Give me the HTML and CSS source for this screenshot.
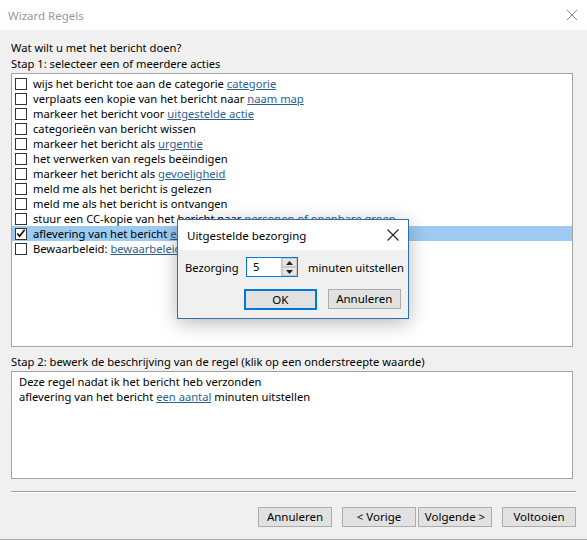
FILE: index.html
```html
<!DOCTYPE html>
<html>
<head>
<meta charset="utf-8">
<link rel="stylesheet" href="styles.css">
</head>
<body>
<div class="window">
  <div class="titlebar">
    <span class="title">Wizard Regels</span>
    <svg class="close" width="12" height="12" viewBox="0 0 12 12"><path d="M1 1L11 11M11 1L1 11" stroke="#8a8a8a" stroke-width="1"/></svg>
  </div>
  <div class="content">
    <div class="label">Wat wilt u met het bericht doen?</div>
    <div class="label">Stap 1: selecteer een of meerdere acties</div>
    <div class="listbox">
      <div class="row"><span class="cb"></span><span>wijs het bericht toe aan de categorie <a>categorie</a></span></div>
      <div class="row"><span class="cb"></span><span>verplaats een kopie van het bericht naar <a>naam map</a></span></div>
      <div class="row"><span class="cb"></span><span>markeer het bericht voor <a>uitgestelde actie</a></span></div>
      <div class="row"><span class="cb"></span><span>categorieën van bericht wissen</span></div>
      <div class="row"><span class="cb"></span><span>markeer het bericht als <a>urgentie</a></span></div>
      <div class="row"><span class="cb"></span><span>het verwerken van regels beëindigen</span></div>
      <div class="row"><span class="cb"></span><span>markeer het bericht als <a>gevoeligheid</a></span></div>
      <div class="row"><span class="cb"></span><span>meld me als het bericht is gelezen</span></div>
      <div class="row"><span class="cb"></span><span>meld me als het bericht is ontvangen</span></div>
      <div class="row"><span class="cb"></span><span>stuur een CC-kopie van het bericht naar <a>personen of openbare groep</a></span></div>
      <div class="row selected"><span class="cb"><svg width="11" height="11" viewBox="0 0 11 11"><path d="M1.5 5.5L4 8.5L9.5 1.5" fill="none" stroke="#000" stroke-width="1.8"/></svg></span><span>aflevering van het bericht <a>een aantal</a> minuten uitstellen</span></div>
      <div class="row"><span class="cb"></span><span>Bewaarbeleid: <a>bewaarbeleid</a></span></div>
    </div>
    <div class="label step2">Stap 2: bewerk de beschrijving van de regel (klik op een onderstreepte waarde)</div>
    <div class="descbox">
      <div>Deze regel nadat ik het bericht heb verzonden</div>
      <div>aflevering van het bericht <a>een aantal</a> minuten uitstellen</div>
    </div>
    <div class="separator"></div>
    <div class="buttons">
      <button class="btn">Annuleren</button>
      <div class="navpair">
        <button class="btn">&lt; Vorige</button>
        <button class="btn">Volgende &gt;</button>
      </div>
      <button class="btn">Voltooien</button>
    </div>
  </div>
  <div class="dialog">
    <div class="dtitle">
      <span>Uitgestelde bezorging</span>
      <svg width="12" height="12" viewBox="0 0 12 12"><path d="M0.5 0.5L11.5 11.5M11.5 0.5L0.5 11.5" stroke="#222" stroke-width="1.1"/></svg>
    </div>
    <div class="dbody">
      <div class="drow">
        <span class="dlabel">Bezorging</span>
        <div class="spin">
          <span class="spinval">5</span>
          <div class="spinbtns">
            <span class="arrow"><svg width="7" height="4" viewBox="0 0 7 4"><path d="M0 4L3.5 0L7 4Z" fill="#222"/></svg></span>
            <span class="arrow"><svg width="7" height="4" viewBox="0 0 7 4"><path d="M0 0L3.5 4L7 0Z" fill="#222"/></svg></span>
          </div>
        </div>
        <span class="dunit">minuten uitstellen</span>
      </div>
      <div class="dbuttons">
        <button class="btn ok">OK</button>
        <button class="btn">Annuleren</button>
      </div>
    </div>
  </div>
</div>
</body>
</html>
```
FILE: styles.css
```css
* { box-sizing: border-box; }
html, body { margin: 0; padding: 0; }
body {
  font-family: "Noto Sans", "Open Sans", sans-serif;
  font-size: 11.2px;
  color: #000;
  background: #f0f0f0;
}
.window {
  position: relative;
  width: 587px;
  height: 540px;
  background: #f0f0f0;
  border-bottom: 1px solid #a9a9a9;
  overflow: hidden;
}
.titlebar {
  height: 30px;
  background: #fff;
  display: flex;
  align-items: center;
  justify-content: space-between;
  padding: 0 9px 0 8px;
}
.title { color: #999; font-size: 11.5px; }
.content {
  padding: 10px 15px 0 11px;
}
.label {
  height: 16px;
  line-height: 16px;
  white-space: nowrap;
}
a {
  color: #2d5f93;
  text-decoration: underline;
  text-underline-offset: 1px;
}
.listbox {
  margin-top: 1px;
  width: 562px;
  height: 274px;
  background: #fff;
  border: 1px solid #a3a3a3;
  padding-top: 2px;
}
.row {
  height: 15px;
  display: flex;
  align-items: center;
  gap: 6px;
  padding-left: 3px;
  white-space: nowrap;
  line-height: 15px;
}
.row.selected { background: #9ccaf0; }
.cb {
  width: 12px;
  height: 12px;
  border: 1px solid #333;
  background: #fff;
  flex: none;
  display: flex;
  align-items: center;
  justify-content: center;
}
.step2 { margin-top: 7px; }
.descbox {
  margin-top: 1px;
  width: 562px;
  height: 108px;
  background: #fff;
  border: 1px solid #a3a3a3;
  padding: 2px 7px;
  line-height: 15px;
}
.separator {
  margin-top: 12px;
  width: 565px;
  height: 2px;
  border-top: 1px solid #a0a0a0;
  border-bottom: 1px solid #fff;
}
.buttons {
  margin-top: 14px;
  display: flex;
  justify-content: flex-end;
  gap: 10px;
  width: 565px;
}
.navpair { display: flex; gap: 2px; }
.btn {
  font-family: inherit;
  font-size: 11.5px;
  height: 20px;
  width: 74px;
  padding: 0;
  background: #e1e1e1;
  border: 1px solid #adadad;
  color: #000;
  line-height: 18px;
}
.dialog {
  position: absolute;
  left: 177px;
  top: 219px;
  width: 232px;
  height: 100px;
  background: #f0f0f0;
  border: 1px solid #2f6fae;
  box-shadow: 0 4px 18px rgba(0,0,0,0.28);
}
.dtitle {
  height: 30px;
  background: #fff;
  display: flex;
  align-items: center;
  justify-content: space-between;
  padding: 0 9px 0 9px;
  font-size: 11.5px;
}
.dbody { padding: 7px 7px 0 7px; }
.drow {
  display: flex;
  align-items: center;
  height: 20px;
  white-space: nowrap;
}
.dlabel { width: 61px; flex: none; }
.spin {
  display: flex;
  flex: none;
  width: 52px;
  height: 20px;
  border: 1px solid #0078d7;
  background: #fff;
}
.spinval { flex: 1; padding-left: 6px; line-height: 18px; }
.spinbtns {
  width: 16px;
  display: flex;
  flex-direction: column;
  border-left: 1px solid #ccc;
  background: #e6e6e6;
}
.arrow {
  flex: 1;
  display: flex;
  align-items: center;
  justify-content: center;
  border: 1px solid #c9c9c9;
}
.dunit { margin-left: 10px; flex: none; }
.dbuttons {
  margin-top: 12px;
  display: flex;
  gap: 11px;
  padding-left: 59px;
}
.btn.ok { border: 2px solid #0078d7; width: 73px; height: 21px; }
```
